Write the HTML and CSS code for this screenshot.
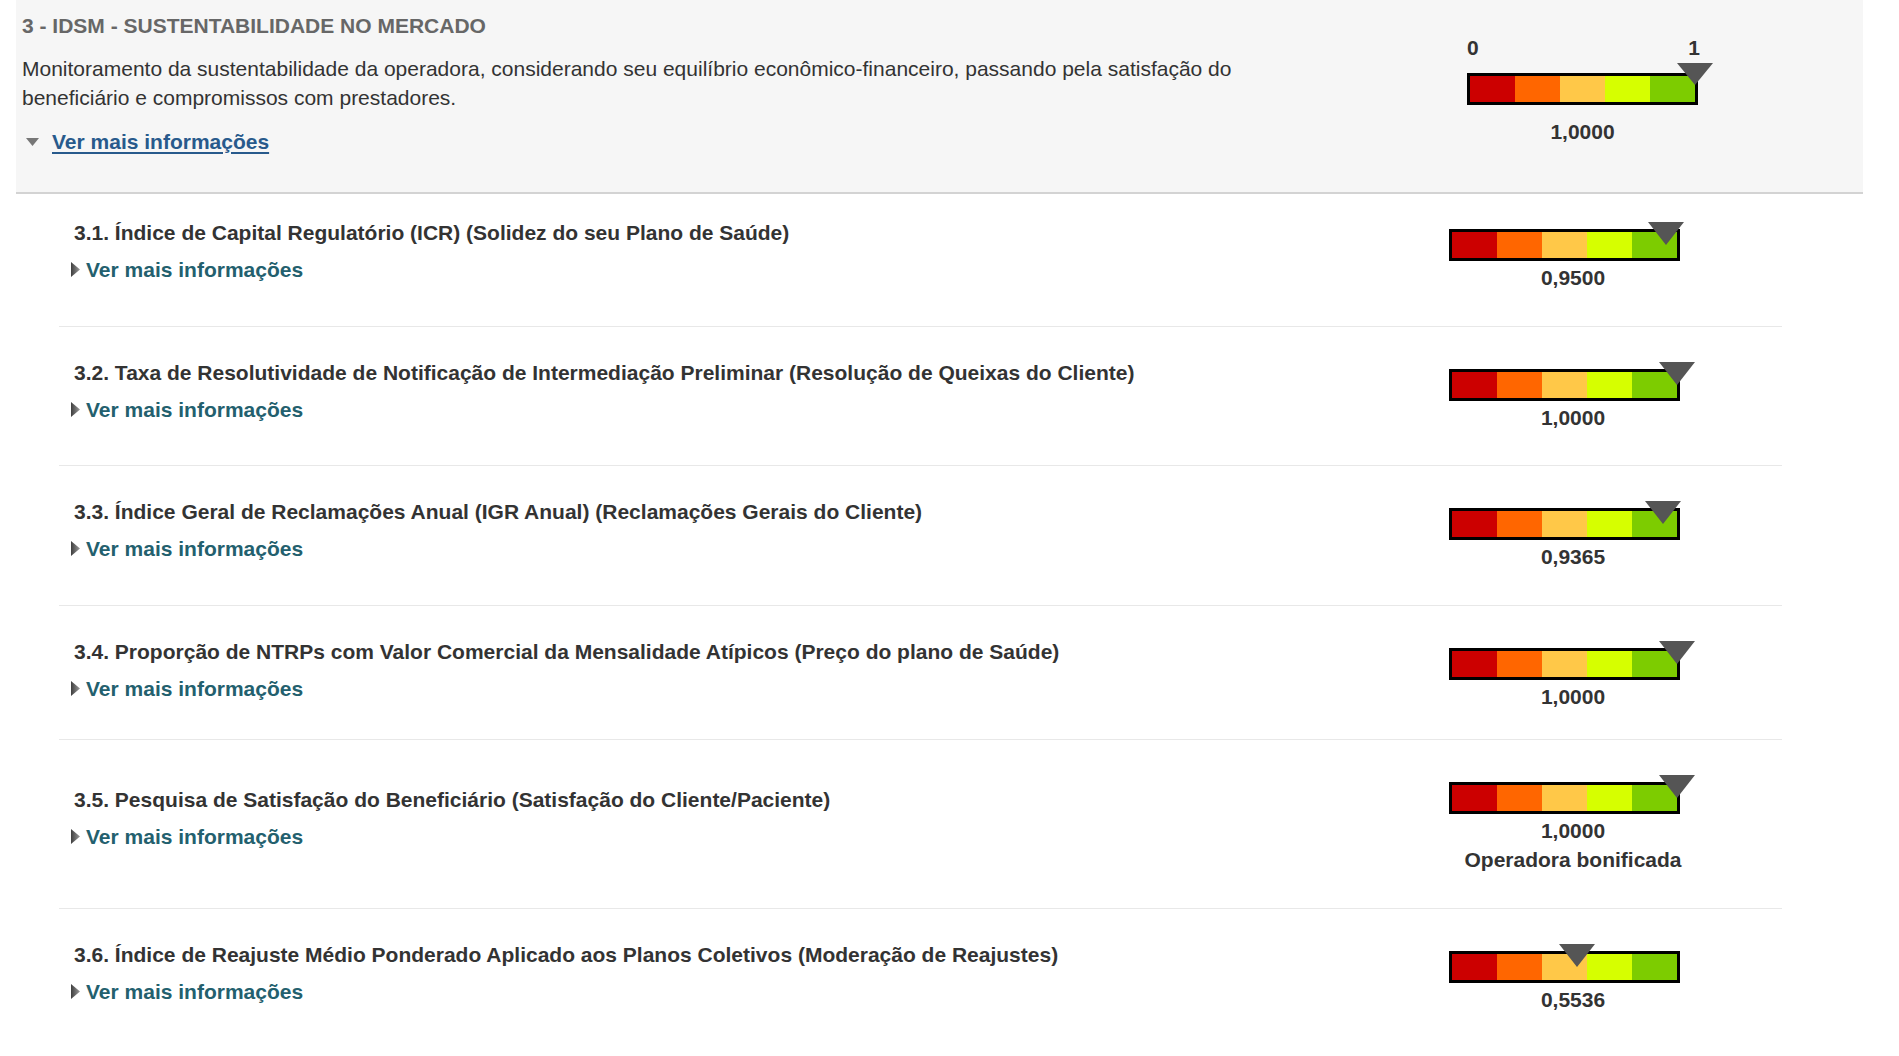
FILE: index.html
```html
<!DOCTYPE html>
<html lang="pt-BR">
<head>
<meta charset="utf-8">
<title>IDSM - Sustentabilidade no Mercado</title>
<link rel="stylesheet" href="styles.css">
</head>
<body>
<section class="panel">
  <div class="panel-text">
    <h2 class="panel-title">3 - IDSM - SUSTENTABILIDADE NO MERCADO</h2>
    <p class="panel-desc">Monitoramento da sustentabilidade da operadora, considerando seu equilíbrio econômico-financeiro, passando pela satisfação do beneficiário e compromissos com prestadores.</p>
    <a class="more-open" href="#"><svg class="tri-down" width="13" height="8" viewBox="0 0 13 8"><polygon points="0,0 13,0 6.5,8" fill="#777"/></svg><span class="more-open-text">Ver mais informações</span></a>
  </div>
  <div class="gauge-main">
    <div class="scale"><span>0</span><span>1</span></div>
    <div class="bar">
      <span class="seg seg-1"></span><span class="seg seg-2"></span><span class="seg seg-3"></span><span class="seg seg-4"></span><span class="seg seg-5"></span>
      <span class="marker marker-main" style="left:225px"></span>
    </div>
    <div class="value value-main">1,0000</div>
  </div>
</section>

<div class="items">
  <div class="item item-first">
    <div class="item-text">
      <h3 class="item-title">3.1. Índice de Capital Regulatório (ICR) (Solidez do seu Plano de Saúde)</h3>
      <a class="more" href="#"><svg class="tri-right" width="9" height="15" viewBox="0 0 9 15"><defs><linearGradient id="g1" x1="0" x2="1" y1="0" y2="0"><stop offset="0" stop-color="#3f3f3f"/><stop offset="1" stop-color="#9a9a9a"/></linearGradient></defs><polygon points="0,0 9,7.5 0,15" fill="url(#g1)"/></svg>Ver mais informações</a>
    </div>
    <div class="gauge">
      <div class="bar">
        <span class="seg seg-1"></span><span class="seg seg-2"></span><span class="seg seg-3"></span><span class="seg seg-4"></span><span class="seg seg-5"></span>
        <span class="marker" style="left:213.75px"></span>
      </div>
      <div class="value">0,9500</div>
    </div>
  </div>

  <div class="item">
    <div class="item-text">
      <h3 class="item-title">3.2. Taxa de Resolutividade de Notificação de Intermediação Preliminar (Resolução de Queixas do Cliente)</h3>
      <a class="more" href="#"><svg class="tri-right" width="9" height="15" viewBox="0 0 9 15"><defs><linearGradient id="g2" x1="0" x2="1" y1="0" y2="0"><stop offset="0" stop-color="#3f3f3f"/><stop offset="1" stop-color="#9a9a9a"/></linearGradient></defs><polygon points="0,0 9,7.5 0,15" fill="url(#g2)"/></svg>Ver mais informações</a>
    </div>
    <div class="gauge">
      <div class="bar">
        <span class="seg seg-1"></span><span class="seg seg-2"></span><span class="seg seg-3"></span><span class="seg seg-4"></span><span class="seg seg-5"></span>
        <span class="marker" style="left:225px"></span>
      </div>
      <div class="value">1,0000</div>
    </div>
  </div>

  <div class="item">
    <div class="item-text">
      <h3 class="item-title">3.3. Índice Geral de Reclamações Anual (IGR Anual) (Reclamações Gerais do Cliente)</h3>
      <a class="more" href="#"><svg class="tri-right" width="9" height="15" viewBox="0 0 9 15"><defs><linearGradient id="g3" x1="0" x2="1" y1="0" y2="0"><stop offset="0" stop-color="#3f3f3f"/><stop offset="1" stop-color="#9a9a9a"/></linearGradient></defs><polygon points="0,0 9,7.5 0,15" fill="url(#g3)"/></svg>Ver mais informações</a>
    </div>
    <div class="gauge">
      <div class="bar">
        <span class="seg seg-1"></span><span class="seg seg-2"></span><span class="seg seg-3"></span><span class="seg seg-4"></span><span class="seg seg-5"></span>
        <span class="marker" style="left:210.7px"></span>
      </div>
      <div class="value">0,9365</div>
    </div>
  </div>

  <div class="item item-short">
    <div class="item-text">
      <h3 class="item-title">3.4. Proporção de NTRPs com Valor Comercial da Mensalidade Atípicos (Preço do plano de Saúde)</h3>
      <a class="more" href="#"><svg class="tri-right" width="9" height="15" viewBox="0 0 9 15"><defs><linearGradient id="g4" x1="0" x2="1" y1="0" y2="0"><stop offset="0" stop-color="#3f3f3f"/><stop offset="1" stop-color="#9a9a9a"/></linearGradient></defs><polygon points="0,0 9,7.5 0,15" fill="url(#g4)"/></svg>Ver mais informações</a>
    </div>
    <div class="gauge">
      <div class="bar">
        <span class="seg seg-1"></span><span class="seg seg-2"></span><span class="seg seg-3"></span><span class="seg seg-4"></span><span class="seg seg-5"></span>
        <span class="marker" style="left:225px"></span>
      </div>
      <div class="value">1,0000</div>
    </div>
  </div>

  <div class="item">
    <div class="item-text">
      <h3 class="item-title">3.5. Pesquisa de Satisfação do Beneficiário (Satisfação do Cliente/Paciente)</h3>
      <a class="more" href="#"><svg class="tri-right" width="9" height="15" viewBox="0 0 9 15"><defs><linearGradient id="g5" x1="0" x2="1" y1="0" y2="0"><stop offset="0" stop-color="#3f3f3f"/><stop offset="1" stop-color="#9a9a9a"/></linearGradient></defs><polygon points="0,0 9,7.5 0,15" fill="url(#g5)"/></svg>Ver mais informações</a>
    </div>
    <div class="gauge">
      <div class="bar">
        <span class="seg seg-1"></span><span class="seg seg-2"></span><span class="seg seg-3"></span><span class="seg seg-4"></span><span class="seg seg-5"></span>
        <span class="marker" style="left:225px"></span>
      </div>
      <div class="value">1,0000</div>
      <div class="value">Operadora bonificada</div>
    </div>
  </div>

  <div class="item item-last">
    <div class="item-text">
      <h3 class="item-title">3.6. Índice de Reajuste Médio Ponderado Aplicado aos Planos Coletivos (Moderação de Reajustes)</h3>
      <a class="more" href="#"><svg class="tri-right" width="9" height="15" viewBox="0 0 9 15"><defs><linearGradient id="g6" x1="0" x2="1" y1="0" y2="0"><stop offset="0" stop-color="#3f3f3f"/><stop offset="1" stop-color="#9a9a9a"/></linearGradient></defs><polygon points="0,0 9,7.5 0,15" fill="url(#g6)"/></svg>Ver mais informações</a>
    </div>
    <div class="gauge">
      <div class="bar">
        <span class="seg seg-1"></span><span class="seg seg-2"></span><span class="seg seg-3"></span><span class="seg seg-4"></span><span class="seg seg-5"></span>
        <span class="marker" style="left:124.56px"></span>
      </div>
      <div class="value">0,5536</div>
    </div>
  </div>
</div>
</body>
</html>
```

FILE: styles.css
```css
html, body {
  margin: 0;
  padding: 0;
  background: #ffffff;
}

body {
  font-family: "Liberation Sans", Arial, sans-serif;
  font-size: 21px;
  line-height: 29.7px;
  color: #333333;
}

/* ---------- header panel ---------- */
.panel {
  display: flex;
  align-items: flex-start;
  box-sizing: border-box;
  width: 1847px;
  margin-left: 16px;
  padding: 11px 0 35px 6px;
  background: #f6f6f6;
  border-bottom: 2px solid #d3d3d3;
}

.panel-text {
  flex: 0 0 1262px;
}

.panel-title {
  margin: 0;
  font-size: inherit;
  line-height: inherit;
  font-weight: bold;
  color: #676767;
}

.panel-desc {
  margin: 13px 0 0;
  color: #333333;
}

.more-open {
  display: inline-block;
  margin-top: 14px;
  color: #285a8c;
  font-weight: bold;
  text-decoration: none;
}

.more-open-text {
  text-decoration: underline;
  text-decoration-thickness: 2px;
  text-underline-offset: 3px;
}

.tri-down {
  display: inline-block;
  vertical-align: 3px;
  margin-left: 4px;
  margin-right: 13px;
}

.gauge-main {
  width: 233px;
  margin-left: 183px;
  margin-top: 22px;
}

.scale {
  display: flex;
  justify-content: space-between;
  font-weight: bold;
  color: #333333;
}

.gauge-main .bar {
  margin-top: 10px;
}

/* ---------- bar ---------- */
.bar {
  position: relative;
  display: flex;
  width: 225px;
  height: 26px;
  border: 3px solid #000000;
}

.seg {
  flex: 1 1 0;
}

.seg-1 { background: #cc0000; }
.seg-2 { background: #ff6600; }
.seg-3 { background: #ffc848; }
.seg-4 { background: #d6ff00; }
.seg-5 { background: #7dcc00; }

.marker {
  position: absolute;
  top: -10px;
  width: 0;
  height: 0;
  margin-left: -18px;
  border-left: 18px solid transparent;
  border-right: 18px solid transparent;
  border-top: 23px solid #555555;
}

.marker-main {
  top: -13px;
  border-top-width: 22px;
}

.value {
  margin-top: 2px;
  text-align: center;
  font-weight: bold;
  color: #333333;
}

.value + .value {
  margin-top: 0;
}

.gauge-main .value-main {
  width: 231px;
  margin-top: 12px;
}

/* ---------- items ---------- */
.items {
  width: 1723px;
  margin-left: 59px;
}

.item {
  display: flex;
  align-items: center;
  padding: 20px 0 30px 15px;
  border-bottom: 1px solid #e8e8e8;
}

.item-first {
  padding-top: 13px;
}

.item-short {
  padding-bottom: 24px;
}

.item-last {
  border-bottom: none;
}

.item-text {
  flex: 1 1 auto;
}

.item-title {
  margin: 0;
  font-size: inherit;
  line-height: inherit;
  font-weight: bold;
  color: #333333;
}

.more {
  display: block;
  margin-top: 7.3px;
  margin-left: -3px;
  color: #23606e;
  font-weight: bold;
  text-decoration: none;
}

.tri-right {
  display: inline-block;
  vertical-align: baseline;
  margin-right: 6px;
}

.gauge {
  flex: 0 0 248px;
  width: 248px;
  margin-right: 85px;
  padding-top: 22px;
  padding-bottom: 3px;
}
```
